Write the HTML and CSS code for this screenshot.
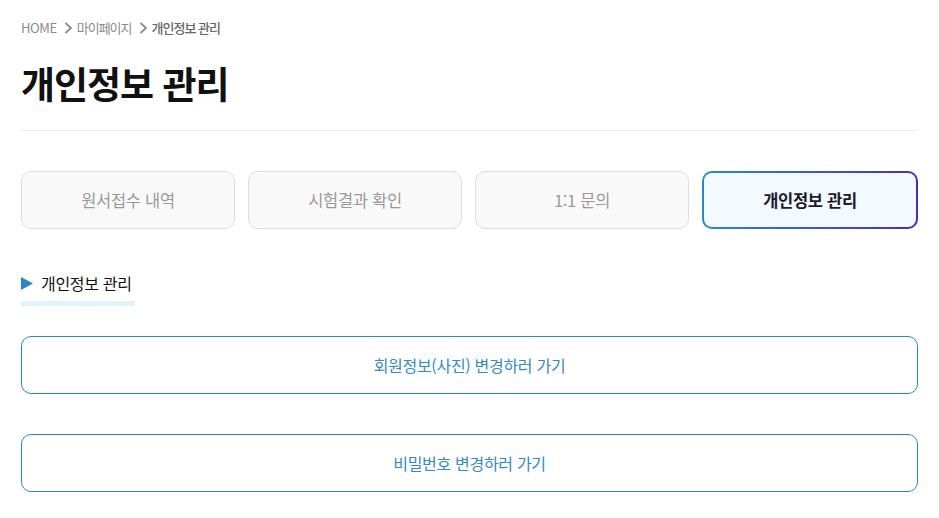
FILE: index.html
```html
<!DOCTYPE html>
<html lang="ko">
<head>
<meta charset="utf-8">
<title>개인정보 관리</title>
<link rel="stylesheet" href="styles.css">
</head>
<body>
<div class="page">
  <nav class="breadcrumb">
    <span class="crumb">HOME</span>
    <svg class="chev" width="10" height="14" viewBox="0 0 10 14"><path d="M2.5 2 L8 7 L2.5 12" fill="none" stroke="#888" stroke-width="1.7"/></svg>
    <span class="crumb ko">마이페이지</span>
    <svg class="chev" width="10" height="14" viewBox="0 0 10 14"><path d="M2.5 2 L8 7 L2.5 12" fill="none" stroke="#888" stroke-width="1.7"/></svg>
    <span class="crumb ko current">개인정보 관리</span>
  </nav>
  <h1 class="title">개인정보 관리</h1>
  <div class="divider"></div>
  <div class="tabs">
    <a class="tab">원서접수 내역</a>
    <a class="tab">시험결과 확인</a>
    <a class="tab">1:1 문의</a>
    <a class="tab active">개인정보 관리</a>
  </div>
  <div class="section-head">
    <div class="section-title">
      <svg class="tri" width="12" height="13" viewBox="0 0 12 13"><path d="M0 0 L12 6.5 L0 13 Z" fill="#2a86c2"/></svg>
      <span>개인정보 관리</span>
    </div>
    <div class="section-bar"></div>
  </div>
  <div class="actions">
    <a class="action">회원정보(사진) 변경하러 가기</a>
    <a class="action">비밀번호 변경하러 가기</a>
  </div>
</div>
</body>
</html>
```
FILE: styles.css
```css
* { box-sizing: border-box; }
html, body { margin: 0; padding: 0; background: #fff; }
body {
  font-family: "Noto Sans CJK KR", "Noto Sans", sans-serif;
  color: #111;
}
.page {
  padding: 18px 21px 0 21px;
}
.breadcrumb {
  display: flex;
  align-items: center;
  gap: 4px;
  font-size: 13px;
  line-height: 20px;
  color: #8a8a8a;
  letter-spacing: -0.4px;
}
.chev { display: block; margin-left: 2px; }
.crumb.ko { letter-spacing: -1px; }
.crumb.current { color: #666; font-weight: 500; }
.title {
  margin: 18px 0 0 0;
  font-size: 37px;
  line-height: 54px;
  font-weight: 700;
  letter-spacing: -1px;
  color: #111;
}
.divider {
  margin-top: 20px;
  height: 1px;
  background: #ececec;
}
.tabs {
  margin-top: 40px;
  display: grid;
  grid-template-columns: 214px 214px 214px 1fr;
  gap: 13px;
}
.tab {
  height: 58px;
  border: 1px solid #dedede;
  border-radius: 10px;
  background: #f9f9f9;
  color: #999;
  font-size: 16.5px;
  display: flex;
  align-items: center;
  justify-content: center;
  letter-spacing: -0.3px;
}
.tab.active {
  border: 2px solid transparent;
  background:
    linear-gradient(#f3f9fe, #f3f9fe) padding-box,
    linear-gradient(90deg, #2a8bc6, #4a2bbd) border-box;
  color: #1a1a2a;
  font-weight: 700;
}
.section-head {
  margin-top: 42px;
  display: inline-flex;
  flex-direction: column;
}
.section-title {
  display: flex;
  align-items: center;
  gap: 8px;
  font-size: 16px;
  line-height: 24px;
  color: #111;
  letter-spacing: -0.3px;
  padding-right: 3px;
}
.tri { display: block; }
.section-bar {
  margin-top: 6px;
  height: 5px;
  background: #e0f3fb;
}
.actions {
  margin-top: 30px;
  display: flex;
  flex-direction: column;
  gap: 40px;
}
.action {
  height: 58px;
  border: 1px solid #2a88c3;
  border-radius: 10px;
  display: flex;
  align-items: center;
  justify-content: center;
  color: #3389c4;
  font-size: 16px;
  letter-spacing: -0.3px;
}
```
